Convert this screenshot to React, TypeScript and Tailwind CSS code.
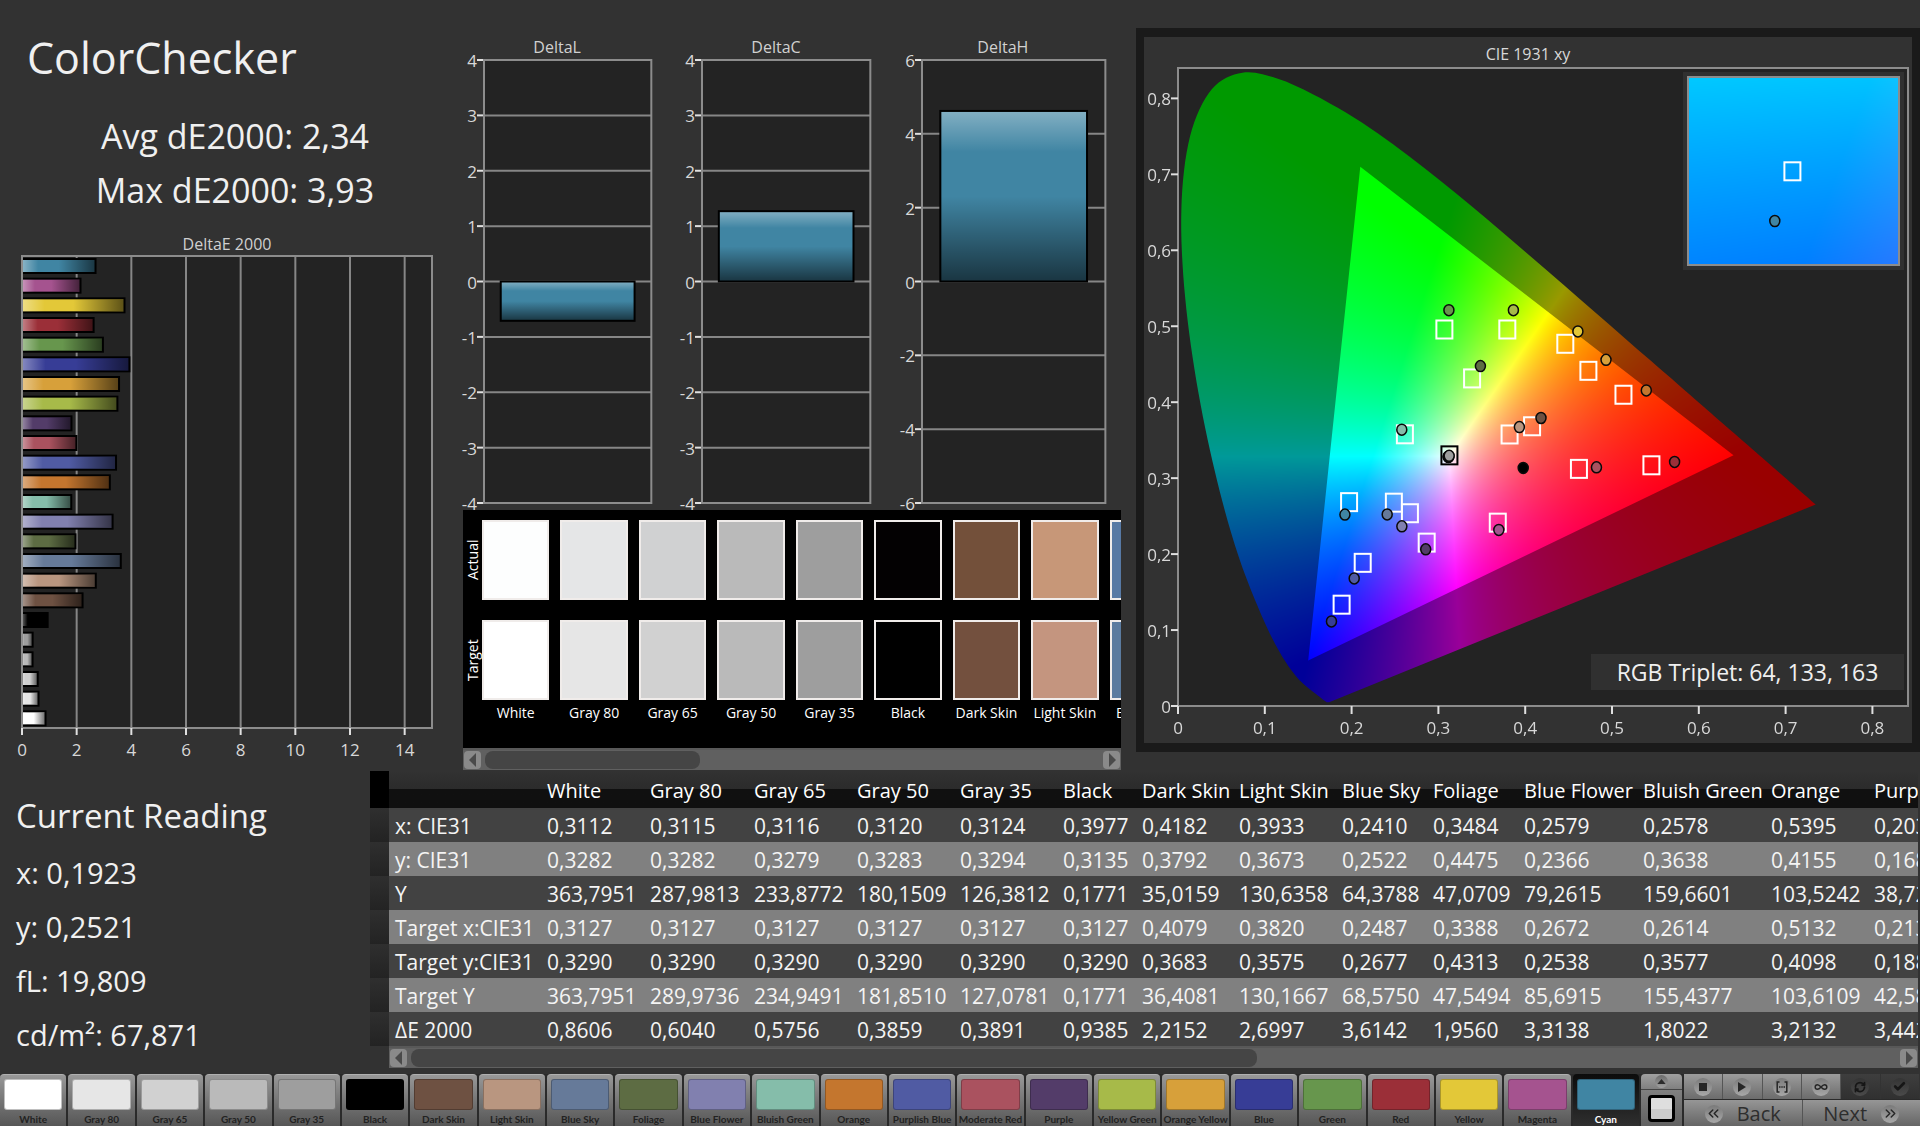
import { useEffect, useRef, type ReactNode } from "react";
import { Check, ChevronsLeft, ChevronsRight, Infinity as InfinityIcon, RefreshCw } from "lucide-react";

type Patch = {
  name: string;
  color: string;
  dE: number;
  actual?: [number, number];
  target?: [number, number];
};

const PATCHES: Patch[] = [
  { name: "White", color: "#ffffff", dE: 0.8606, actual: [0.3112, 0.3282] },
  { name: "Gray 80", color: "#e6e6e6", dE: 0.604, actual: [0.3115, 0.3282] },
  { name: "Gray 65", color: "#d1d1d1", dE: 0.5756, actual: [0.3116, 0.3279] },
  { name: "Gray 50", color: "#bababa", dE: 0.3859, actual: [0.312, 0.3283] },
  { name: "Gray 35", color: "#9e9e9e", dE: 0.3891, actual: [0.3124, 0.3294] },
  { name: "Black", color: "#000000", dE: 0.9385, actual: [0.3977, 0.3135] },
  { name: "Dark Skin", color: "#6e5142", dE: 2.2152, actual: [0.4182, 0.3792], target: [0.4079, 0.3683] },
  { name: "Light Skin", color: "#b99680", dE: 2.6997, actual: [0.3933, 0.3673], target: [0.382, 0.3575] },
  { name: "Blue Sky", color: "#667a99", dE: 3.6142, actual: [0.241, 0.2522], target: [0.2487, 0.2677] },
  { name: "Foliage", color: "#5d6c43", dE: 1.956, actual: [0.3484, 0.4475], target: [0.3388, 0.4313] },
  { name: "Blue Flower", color: "#8180af", dE: 3.3138, actual: [0.2579, 0.2366], target: [0.2672, 0.2538] },
  { name: "Bluish Green", color: "#85bdaa", dE: 1.8022, actual: [0.2578, 0.3638], target: [0.2614, 0.3577] },
  { name: "Orange", color: "#c4762e", dE: 3.2132, actual: [0.5395, 0.4155], target: [0.5132, 0.4098] },
  { name: "Purplish Blue", color: "#505ba3", dE: 3.44, actual: [0.203, 0.168], target: [0.2128, 0.1885] },
  { name: "Moderate Red", color: "#aa525f", dE: 1.99, actual: [0.4821, 0.3143], target: [0.4619, 0.3122] },
  { name: "Purple", color: "#533c69", dE: 1.81, actual: [0.2854, 0.2063], target: [0.2865, 0.2151] },
  { name: "Yellow Green", color: "#a7ba49", dE: 3.49, actual: [0.3864, 0.5211], target: [0.3794, 0.4957] },
  { name: "Orange Yellow", color: "#d7a03a", dE: 3.55, actual: [0.4931, 0.4558], target: [0.4728, 0.4413] },
  { name: "Blue", color: "#373d96", dE: 3.93, actual: [0.1768, 0.1114], target: [0.1885, 0.1334] },
  { name: "Green", color: "#67964d", dE: 2.96, actual: [0.3121, 0.5211], target: [0.3069, 0.4957] },
  { name: "Red", color: "#9b2f38", dE: 2.62, actual: [0.5721, 0.3214], target: [0.5454, 0.3169] },
  { name: "Yellow", color: "#e3c838", dE: 3.75, actual: [0.4607, 0.4931], target: [0.4462, 0.4769] },
  { name: "Magenta", color: "#a5538f", dE: 2.14, actual: [0.3696, 0.2318], target: [0.3684, 0.2414] },
  { name: "Cyan", color: "#4085a3", dE: 2.69, actual: [0.1923, 0.2521], target: [0.1971, 0.2684] },
];

const SWATCHES = [
  { name: "White", actual: "#fdfefe", target: "#ffffff" },
  { name: "Gray 80", actual: "#e5e6e7", target: "#e6e6e6" },
  { name: "Gray 65", actual: "#d0d1d2", target: "#d1d1d1" },
  { name: "Gray 50", actual: "#bababa", target: "#bababa" },
  { name: "Gray 35", actual: "#9e9e9e", target: "#9e9e9e" },
  { name: "Black", actual: "#030102", target: "#000000" },
  { name: "Dark Skin", actual: "#73503a", target: "#73503e" },
  { name: "Light Skin", actual: "#c79778", target: "#c4957f" },
  { name: "Blue Sky", actual: "#5779a4", target: "#5b7b9f" },
];

const COLUMNS = ["White", "Gray 80", "Gray 65", "Gray 50", "Gray 35", "Black", "Dark Skin", "Light Skin", "Blue Sky", "Foliage", "Blue Flower", "Bluish Green", "Orange", "Purplish Blue"];
const COLUMN_WIDTHS = [19, 152, 103, 104, 103, 103, 103, 79, 97, 103, 91, 91, 119, 128, 103, 160];

const ROWS: [string, string[]][] = [
  ["x: CIE31", ["0,3112", "0,3115", "0,3116", "0,3120", "0,3124", "0,3977", "0,4182", "0,3933", "0,2410", "0,3484", "0,2579", "0,2578", "0,5395", "0,2030"]],
  ["y: CIE31", ["0,3282", "0,3282", "0,3279", "0,3283", "0,3294", "0,3135", "0,3792", "0,3673", "0,2522", "0,4475", "0,2366", "0,3638", "0,4155", "0,1680"]],
  ["Y", ["363,7951", "287,9813", "233,8772", "180,1509", "126,3812", "0,1771", "35,0159", "130,6358", "64,3788", "47,0709", "79,2615", "159,6601", "103,5242", "38,7200"]],
  ["Target x:CIE31", ["0,3127", "0,3127", "0,3127", "0,3127", "0,3127", "0,3127", "0,4079", "0,3820", "0,2487", "0,3388", "0,2672", "0,2614", "0,5132", "0,2130"]],
  ["Target y:CIE31", ["0,3290", "0,3290", "0,3290", "0,3290", "0,3290", "0,3290", "0,3683", "0,3575", "0,2677", "0,4313", "0,2538", "0,3577", "0,4098", "0,1880"]],
  ["Target Y", ["363,7951", "289,9736", "234,9491", "181,8510", "127,0781", "0,1771", "36,4081", "130,1667", "68,5750", "47,5494", "85,6915", "155,4377", "103,6109", "42,5800"]],
  ["ΔE 2000", ["0,8606", "0,6040", "0,5756", "0,3859", "0,3891", "0,9385", "2,2152", "2,6997", "3,6142", "1,9560", "3,3138", "1,8022", "3,2132", "3,4420"]],
];

const pct = (v: number) => `${v * 100}%`;

/* ---------- bar charts ---------- */

function DeltaEChart() {
  const max = 15;
  const bars = [...PATCHES].reverse();
  return (
    <figure className="mt-4">
      <figcaption className="text-center text-base leading-5 text-[#d0d0d0]">DeltaE 2000</figcaption>
      <svg className="mt-[2px] mb-9 block h-[472px] w-full overflow-visible" role="img" aria-label="DeltaE 2000 per patch">
        <defs>
          <linearGradient id="shine-x">
            <stop offset="0" stopColor="#fff" stopOpacity="0.4" />
            <stop offset="0.22" stopColor="#fff" stopOpacity="0" />
            <stop offset="0.5" stopColor="#000" stopOpacity="0" />
            <stop offset="1" stopColor="#000" stopOpacity="0.6" />
          </linearGradient>
        </defs>
        <rect width="100%" height="100%" fill="#232323" />
        {[2, 4, 6, 8, 10, 12, 14].map((t) => (
          <line key={t} x1={pct(t / max)} x2={pct(t / max)} y1="0" y2="100%" stroke="#868686" strokeWidth="2" />
        ))}
        <rect width="100%" height="100%" fill="none" stroke="#8c8c8c" strokeWidth="2" />
        {bars.map((b, i) => (
          <svg key={b.name} y={pct(i / 24)} className="overflow-visible">
            <rect y="3" width={pct(b.dE / max)} height="14" fill={b.color} stroke="#000" strokeWidth="2" />
            <rect y="4" width={pct(b.dE / max)} height="12" fill="url(#shine-x)" />
          </svg>
        ))}
        <line x1="0" x2="0" y1="0" y2="100%" stroke="#8c8c8c" strokeWidth="2" />
        {[0, 2, 4, 6, 8, 10, 12, 14].map((t) => (
          <svg key={t} x={pct(t / max)} y="100%" className="overflow-visible">
            <line y1="0" y2="7" stroke="#e0e0e0" strokeWidth="2" />
            <text y="28" textAnchor="middle" fill="#d8d8d8" fontSize="17">{t}</text>
          </svg>
        ))}
      </svg>
    </figure>
  );
}

function DeltaChart({ title, max, step, value }: { title: string; max: number; step: number; value: number }) {
  const ticks: number[] = [];
  for (let t = max; t >= -max; t -= step) ticks.push(t);
  const pos = (v: number) => (max - v) / (2 * max);
  const top = Math.max(value, 0);
  const bottom = Math.min(value, 0);
  return (
    <figure>
      <figcaption className="text-center text-base leading-5 text-[#d0d0d0]">{title}</figcaption>
      <div className="mt-[3px] pl-[21px]">
        <svg className="block h-[443px] w-full overflow-visible" role="img" aria-label={title}>
          <defs>
            <linearGradient id={`shine-${title}`} x2="0" y2="1">
              <stop offset="0" stopColor="#fff" stopOpacity="0.35" />
              <stop offset="0.24" stopColor="#fff" stopOpacity="0" />
              <stop offset="0.5" stopColor="#000" stopOpacity="0" />
              <stop offset="1" stopColor="#000" stopOpacity="0.6" />
            </linearGradient>
          </defs>
          <rect width="100%" height="100%" fill="#232323" />
          {ticks.map((t) => (
            <svg key={t} y={pct(pos(t))} className="overflow-visible">
              <line x1="0" x2="100%" stroke="#868686" strokeWidth="2" />
              <line x1="-7" x2="0" stroke="#e0e0e0" strokeWidth="2" />
              <text x="-7" y="7" textAnchor="end" fill="#d8d8d8" fontSize="17">{t}</text>
            </svg>
          ))}
          <rect width="100%" height="100%" fill="none" stroke="#8c8c8c" strokeWidth="2" />
          <rect x="10%" width="80%" y={pct(pos(top))} height={pct((top - bottom) / (2 * max))} fill="#4085a3" />
          <rect x="10%" width="80%" y={pct(pos(top))} height={pct((top - bottom) / (2 * max))} fill={`url(#shine-${title})`} stroke="#000" strokeWidth="2" />
        </svg>
      </div>
    </figure>
  );
}

/* ---------- scrollbar ---------- */

function ScrollBar({ thumb, label }: { thumb: string; label: string }) {
  return (
    <div className="flex h-[22px] items-center gap-1 border-t-2 border-[#585858] bg-[#606060] px-px" aria-label={label}>
      <button type="button" aria-label="Scroll left" className="flex h-[18px] w-[17px] shrink-0 items-center justify-center rounded-[4px] bg-[#8a8a8a]">
        <svg viewBox="0 0 8 14" className="h-[14px] w-2"><path d="M7 0v14L0 7z" fill="#4a4a4a" /></svg>
      </button>
      <div className="h-[18px] flex-1">
        <div className={`h-full rounded-lg bg-[#454545] ${thumb}`} />
      </div>
      <button type="button" aria-label="Scroll right" className="flex h-[18px] w-[17px] shrink-0 items-center justify-center rounded-[4px] bg-[#8a8a8a]">
        <svg viewBox="0 0 8 14" className="h-[14px] w-2"><path d="M1 0v14l7-7z" fill="#4a4a4a" /></svg>
      </button>
    </div>
  );
}

/* ---------- swatch comparison ---------- */

function SwatchPanel() {
  return (
    <section aria-label="Actual and target swatches" className="mr-[15px] mt-[7px]">
      <div className="flex h-[238px] overflow-hidden bg-black pt-[10px]">
        <div className="flex w-[19px] shrink-0 flex-col gap-5 text-[14px] text-white">
          <span className="flex h-20 rotate-180 items-center justify-center leading-[19px] [writing-mode:vertical-rl]">Actual</span>
          <span className="flex h-20 rotate-180 items-center justify-center leading-[19px] [writing-mode:vertical-rl]">Target</span>
        </div>
        <ul className="grid w-[695px] shrink-0 grid-cols-9 gap-[11px]">
          {SWATCHES.map((s) => (
            <li key={s.name} className="flex flex-col items-center">
              <span className="block h-20 w-full border-2 border-[#f0ecea]" style={{ backgroundColor: s.actual }} />
              <span className="mt-5 block h-20 w-full border-2 border-[#f0ecea]" style={{ backgroundColor: s.target }} />
              <span className="mt-1 text-[14px] leading-[18px] whitespace-nowrap text-white">{s.name}</span>
            </li>
          ))}
        </ul>
      </div>
      <ScrollBar thumb="w-[35%]" label="Swatch scroll bar" />
    </section>
  );
}

/* ---------- CIE 1931 diagram ---------- */

const LOCUS = [
  [0.1741, 0.005], [0.1733, 0.0048], [0.1714, 0.0051], [0.1689, 0.0069], [0.1644, 0.0109], [0.1566, 0.0177],
  [0.144, 0.0297], [0.1355, 0.0399], [0.1241, 0.0578], [0.1096, 0.0868], [0.0913, 0.1327], [0.0687, 0.2007], [0.0454, 0.295],
  [0.0235, 0.4127], [0.0082, 0.5384], [0.0039, 0.6548], [0.0139, 0.7502], [0.0389, 0.812], [0.0743, 0.8338],
  [0.1142, 0.8262], [0.1547, 0.8059], [0.1929, 0.7816], [0.2296, 0.7543], [0.2658, 0.7243], [0.3016, 0.6923],
  [0.3373, 0.6589], [0.3731, 0.6245], [0.4087, 0.5896], [0.4441, 0.5547], [0.4788, 0.5202], [0.5125, 0.4866],
  [0.5448, 0.4544], [0.5752, 0.4242], [0.6029, 0.3965], [0.627, 0.3725], [0.6658, 0.334], [0.6915, 0.3083],
  [0.719, 0.2809], [0.7347, 0.2653],
];
const GAMUT = [[0.64, 0.33], [0.21, 0.71], [0.15, 0.06]];
const X_MAX = 0.841;
const Y_MAX = 0.84;

/** Brightest displayable RGB for a chromaticity. */
function chromaToRgb(x: number, y: number): [number, number, number] {
  const X = x / y;
  const Z = (1 - x - y) / y;
  const r = Math.max(0, 3.2406 * X - 1.5372 - 0.4986 * Z);
  const g = Math.max(0, -0.9689 * X + 1.8758 + 0.0415 * Z);
  const b = Math.max(0, 0.0557 * X - 0.204 + 1.057 * Z);
  const m = Math.max(r, g, b) / 255;
  return [r / m, g / m, b / m];
}

type Area = { x0: number; x1: number; y0: number; y1: number };

function ChromaField({ area, width, height, locus }: { area: Area; width: number; height: number; locus?: boolean }) {
  const ref = useRef<HTMLCanvasElement>(null);
  useEffect(() => {
    const ctx = ref.current?.getContext("2d");
    if (!ctx) return;
    const toX = (x: number) => ((x - area.x0) / (area.x1 - area.x0)) * width;
    const toY = (y: number) => ((area.y1 - y) / (area.y1 - area.y0)) * height;
    const image = ctx.createImageData(width, height);
    for (let py = 0; py < height; py++) {
      const y = area.y1 - ((py + 0.5) / height) * (area.y1 - area.y0);
      for (let px = 0; px < width; px++) {
        const x = area.x0 + ((px + 0.5) / width) * (area.x1 - area.x0);
        const [r, g, b] = chromaToRgb(x, Math.max(y, 0.001));
        const i = (py * width + px) * 4;
        image.data[i] = r;
        image.data[i + 1] = g;
        image.data[i + 2] = b;
        image.data[i + 3] = 255;
      }
    }
    ctx.putImageData(image, 0, 0);
    if (!locus) return;
    const trace = (points: number[][]) => {
      points.forEach(([x, y], i) => (i ? ctx.lineTo(toX(x), toY(y)) : ctx.moveTo(toX(x), toY(y))));
      ctx.closePath();
    };
    ctx.fillStyle = "rgba(0,0,0,0.4)";
    ctx.beginPath();
    ctx.rect(0, 0, width, height);
    trace(GAMUT);
    ctx.fill("evenodd");
    ctx.globalCompositeOperation = "destination-in";
    ctx.fillStyle = "#000";
    ctx.beginPath();
    const p = LOCUS.map(([x, y]) => [toX(x), toY(y)]);
    ctx.moveTo(p[0][0], p[0][1]);
    for (let i = 0; i < p.length - 1; i++) {
      const a = p[Math.max(i - 1, 0)];
      const d = p[Math.min(i + 2, p.length - 1)];
      const b = p[i];
      const c = p[i + 1];
      ctx.bezierCurveTo(b[0] + (c[0] - a[0]) / 6, b[1] + (c[1] - a[1]) / 6, c[0] - (d[0] - b[0]) / 6, c[1] - (d[1] - b[1]) / 6, c[0], c[1]);
    }
    ctx.closePath();
    ctx.fill();
    ctx.globalCompositeOperation = "source-over";
  }, [area, width, height, locus]);
  return <canvas ref={ref} width={width} height={height} className="block h-full w-full" />;
}

const MAIN_AREA: Area = { x0: 0, x1: X_MAX, y0: 0, y1: Y_MAX };
const INSET_AREA: Area = { x0: 0.1689, x1: 0.2259, y0: 0.238, y1: 0.299 };
const INSET_FIELD: Area = { x0: 0.173, x1: 0.221, y0: 0.238, y1: 0.293 };

function TargetMark({ x, y, area, color = "#fff" }: { x: number; y: number; area: Area; color?: string }) {
  return (
    <svg x={pct((x - area.x0) / (area.x1 - area.x0))} y={pct((area.y1 - y) / (area.y1 - area.y0))} className="overflow-visible">
      <rect x="-8" y="-9" width="16" height="18" fill="none" stroke={color} strokeWidth="2" />
    </svg>
  );
}

function ActualMark({ x, y, area, color }: { x: number; y: number; area: Area; color: string }) {
  return (
    <svg x={pct((x - area.x0) / (area.x1 - area.x0))} y={pct((area.y1 - y) / (area.y1 - area.y0))} className="overflow-visible">
      <ellipse rx="5" ry="5.500" fill={color} stroke="#0a0a0a" strokeWidth="1.500" />
    </svg>
  );
}

function CieChart() {
  const cyan = PATCHES[23];
  const labels = ["0", "0,1", "0,2", "0,3", "0,4", "0,5", "0,6", "0,7", "0,8"];
  return (
    <section className="mt-7 self-start border-8 border-t-[9px] border-b-[9px] border-[#1a1a1a] bg-[#323232] pr-1 pb-[37px] pl-[34px]">
      <h2 className="pt-[7px] pr-[30px] pb-1 text-center text-base leading-5 text-[#d8d8d8]">CIE 1931 xy</h2>
      <div className="relative h-[638px] bg-[#232323]">
        <ChromaField area={MAIN_AREA} width={730} height={638} locus />
        <svg className="absolute inset-0 h-full w-full overflow-visible" role="img" aria-label="CIE 1931 xy chromaticity">
          <rect width="100%" height="100%" fill="none" stroke="#8c8c8c" strokeWidth="2" />
          {labels.map((l, i) => (
            <svg key={l} x={pct(i / 10 / X_MAX)} y="100%" className="overflow-visible">
              <line y1="0" y2="8" stroke="#e0e0e0" strokeWidth="2" />
              <text y="28" textAnchor="middle" fill="#d8d8d8" fontSize="17">{l}</text>
            </svg>
          ))}
          {labels.map((l, i) => (
            <svg key={l} y={pct(1 - i / 10 / Y_MAX)} className="overflow-visible">
              <line x1="-7" x2="0" stroke="#e0e0e0" strokeWidth="2" />
              <text x="-7" y="7" textAnchor="end" fill="#d8d8d8" fontSize="17">{l}</text>
            </svg>
          ))}
          {PATCHES.map((p) => p.target && <TargetMark key={p.name} x={p.target[0]} y={p.target[1]} area={MAIN_AREA} />)}
          <TargetMark x={0.3127} y={0.33} area={MAIN_AREA} color="#000" />
          {PATCHES.map((p) => p.actual && <ActualMark key={p.name} x={p.actual[0]} y={p.actual[1]} area={MAIN_AREA} color={p.color} />)}
        </svg>
        <div className="absolute top-1 right-1 h-[198px] w-[221px] border-4 border-[#303030]">
          <div className="relative h-full w-full border-2 border-[#8c8c8c]">
            <ChromaField area={INSET_FIELD} width={209} height={186} />
            <svg className="absolute inset-0 h-full w-full">
              <TargetMark x={cyan.target![0]} y={cyan.target![1]} area={INSET_AREA} />
              <ActualMark x={cyan.actual![0]} y={cyan.actual![1]} area={INSET_AREA} color={cyan.color} />
            </svg>
          </div>
        </div>
        <p className="absolute right-1 bottom-4 flex h-9 w-[313px] items-center justify-center bg-[#303030] text-[23px] text-[#f0f0f0]">
          RGB Triplet: 64, 133, 163
        </p>
      </div>
    </section>
  );
}

/* ---------- data table ---------- */

function ReadingsTable() {
  return (
    <section className="mr-[2px] min-w-0 flex-1 overflow-hidden">
      <table className="w-max table-fixed text-left text-[21px] text-[#f4f4f4]">
        <colgroup>
          {COLUMN_WIDTHS.map((w, i) => (
            <col key={i} style={{ width: w }} />
          ))}
        </colgroup>
        <thead>
          <tr className="h-[37px] bg-linear-to-b from-[#323232] from-0% via-[#2b2b2b] via-50% to-[#101010] to-50%">
            <td className="bg-black" />
            <td />
            {COLUMNS.map((c) => (
              <th key={c} scope="col" className="pt-[3px] pl-[6px] text-xl font-normal whitespace-nowrap text-white">{c}</th>
            ))}
          </tr>
        </thead>
        <tbody>
          {ROWS.map(([label, values]) => (
            <tr key={label} className="h-[34px] odd:bg-[#424242] even:bg-[#808080]">
              <td className="bg-linear-to-b from-[#2f2f2f] to-[#232323]" />
              <th scope="row" className="pt-[2px] pl-[6px] leading-8 font-normal whitespace-nowrap">{label}</th>
              {values.map((v, i) => (
                <td key={i} className="pt-[2px] pl-[6px] leading-8 whitespace-nowrap">{v}</td>
              ))}
            </tr>
          ))}
        </tbody>
      </table>
      <div className="ml-[19px]">
        <ScrollBar thumb="w-[57%]" label="Table scroll bar" />
      </div>
    </section>
  );
}

/* ---------- bottom tool bar ---------- */

function Knob({ children, dark }: { children: ReactNode; dark?: boolean }) {
  return (
    <span
      className={
        dark
          ? "flex size-[18px] items-center justify-center rounded-full bg-linear-to-b from-[#343434] to-[#4a4a4a] text-[#161616]"
          : "flex size-[18px] items-center justify-center rounded-full bg-linear-to-b from-[#7a7a7a] to-[#a8a8a8] text-[#262626]"
      }
    >
      {children}
    </span>
  );
}

const TOOL = "flex h-[25px] flex-1 items-center justify-center border-r border-[#555] bg-linear-to-b from-[#9c9c9c] to-[#6c6c6c]";
const TOOL_OFF = "flex h-[25px] flex-1 items-center justify-center border-r border-[#333] bg-linear-to-b from-[#3e3e3e] to-[#303030]";

function Toolbar() {
  return (
    <footer className="mt-[6px] flex h-[53px] bg-[#2a2a2a]">
      <div className="flex min-w-0 flex-1 gap-[2px]">
        {PATCHES.map((p) => {
          const active = p.name === "Cyan";
          return (
            <button
              key={p.name}
              type="button"
              aria-pressed={active}
              className={
                active
                  ? "flex min-w-0 flex-1 flex-col items-center rounded-t-[4px] bg-linear-to-b from-[#0c0c0c] to-[#303030] px-1 pt-[5px] text-white"
                  : "flex min-w-0 flex-1 flex-col items-center rounded-t-[4px] border-t border-[#b0b0b0] bg-linear-to-b from-[#989898] to-[#555555] px-1 pt-1 text-[#222]"
              }
            >
              <span className="block h-[31px] w-full rounded-[3px] border border-black/25" style={{ backgroundColor: p.color }} />
              <span className="mt-[2px] font-['Lato','Open_Sans',sans-serif] text-[10px] leading-[14px] font-bold whitespace-nowrap">{p.name}</span>
            </button>
          );
        })}
      </div>
      <div className="ml-[2px] flex w-[41px] flex-col">
        <button type="button" aria-label="Scroll up" className="flex h-4 items-center justify-center rounded-t-[4px] border-b border-[#444] bg-linear-to-b from-[#a0a0a0] to-[#808080]">
          <span className="flex size-[13px] items-center justify-center rounded-full bg-linear-to-b from-[#6c6c6c] to-[#a0a0a0]">
            <svg viewBox="0 0 10 6" className="h-[5px] w-[9px]"><path d="M5 0l5 6H0z" fill="#2c2c2c" /></svg>
          </span>
        </button>
        <button type="button" aria-label="Patch window" className="flex flex-1 items-center justify-center bg-linear-to-b from-[#808080] to-[#606060]">
          <span className="size-[27px] rounded-[4px] border-[3px] border-black bg-linear-to-b from-[#dedede] from-50% to-[#cccccc] to-50%" />
        </button>
      </div>
      <div className="ml-[2px] w-[236px]">
        <div className="flex">
          <button type="button" aria-label="Stop" className={TOOL}>
            <Knob><span className="block size-2 bg-[#262626]" /></Knob>
          </button>
          <button type="button" aria-label="Play" className={TOOL}>
            <Knob><svg viewBox="0 0 8 10" className="h-[10px] w-2"><path d="M0 0l8 5-8 5z" fill="#262626" /></svg></Knob>
          </button>
          <button type="button" aria-label="Read range" className={TOOL}>
            <Knob>
              <svg viewBox="0 0 12 12" className="size-3" fill="none" stroke="#262626" strokeWidth="1.500">
                <path d="M3.500 1H1.200v10h2.300M8.500 1h2.300v10H8.500M3 6h1.500M5.300 6h1.400M7.500 6H9" />
              </svg>
            </Knob>
          </button>
          <button type="button" aria-label="Continuous" className={TOOL}>
            <Knob><InfinityIcon size={14} strokeWidth={2.5} /></Knob>
          </button>
          <button type="button" aria-label="Refresh" disabled className={TOOL_OFF}>
            <Knob dark><RefreshCw size={12} strokeWidth={3.5} /></Knob>
          </button>
          <button type="button" aria-label="Accept" disabled className={TOOL_OFF}>
            <Knob dark><Check size={13} strokeWidth={5} /></Knob>
          </button>
        </div>
        <div className="mt-px flex text-xl leading-[27px] font-medium text-[#2e2e2e]">
          <button type="button" className="flex h-[27px] flex-1 items-center justify-center gap-[14px] border-r border-[#555] bg-linear-to-b from-[#969696] to-[#646464]">
            <Knob><ChevronsLeft size={17} strokeWidth={2} /></Knob>
            Back
          </button>
          <button type="button" className="flex h-[27px] flex-1 items-center justify-center gap-[14px] bg-linear-to-b from-[#969696] to-[#646464]">
            Next
            <Knob><ChevronsRight size={17} strokeWidth={2} /></Knob>
          </button>
        </div>
      </div>
    </footer>
  );
}

/* ---------- page ---------- */

export default function App() {
  return (
    <div className="flex min-h-screen flex-col justify-between overflow-hidden bg-[#323232] font-['Open_Sans','Noto_Sans',sans-serif] text-[#f0f0f0]">
      <main>
        <div className="grid grid-cols-[463fr_673fr_784fr]">
          <section className="min-w-0 pt-[34px] pr-[31px] pl-[22px]">
            <h1 className="pl-[5px] text-[43px] leading-[48px]">ColorChecker</h1>
            <div className="mt-[27px] mb-[17px] pl-4 text-center text-[34px] leading-[54px] whitespace-nowrap">
              <p>Avg dE2000: 2,34</p>
              <p>Max dE2000: 3,93</p>
            </div>
            <DeltaEChart />
          </section>
          <section className="min-w-0 pt-[37px]">
            <div className="grid grid-cols-[188fr_189fr_204fr] gap-[30px] pr-[31px]">
              <DeltaChart title="DeltaL" max={4} step={1} value={-0.71} />
              <DeltaChart title="DeltaC" max={4} step={1} value={1.27} />
              <DeltaChart title="DeltaH" max={6} step={2} value={4.62} />
            </div>
            <SwatchPanel />
          </section>
          <CieChart />
        </div>
        <div className="mt-px flex">
          <section className="w-[370px] shrink-0 pt-[17px] pl-4">
            <h2 className="text-[33px] leading-[56px]">Current Reading</h2>
            <div className="mt-[2px] text-[29px] leading-[54px]">
              <p>x: 0,1923</p>
              <p>y: 0,2521</p>
              <p>fL: 19,809</p>
              <p>cd/m²: 67,871</p>
            </div>
          </section>
          <ReadingsTable />
        </div>
      </main>
      <Toolbar />
    </div>
  );
}
